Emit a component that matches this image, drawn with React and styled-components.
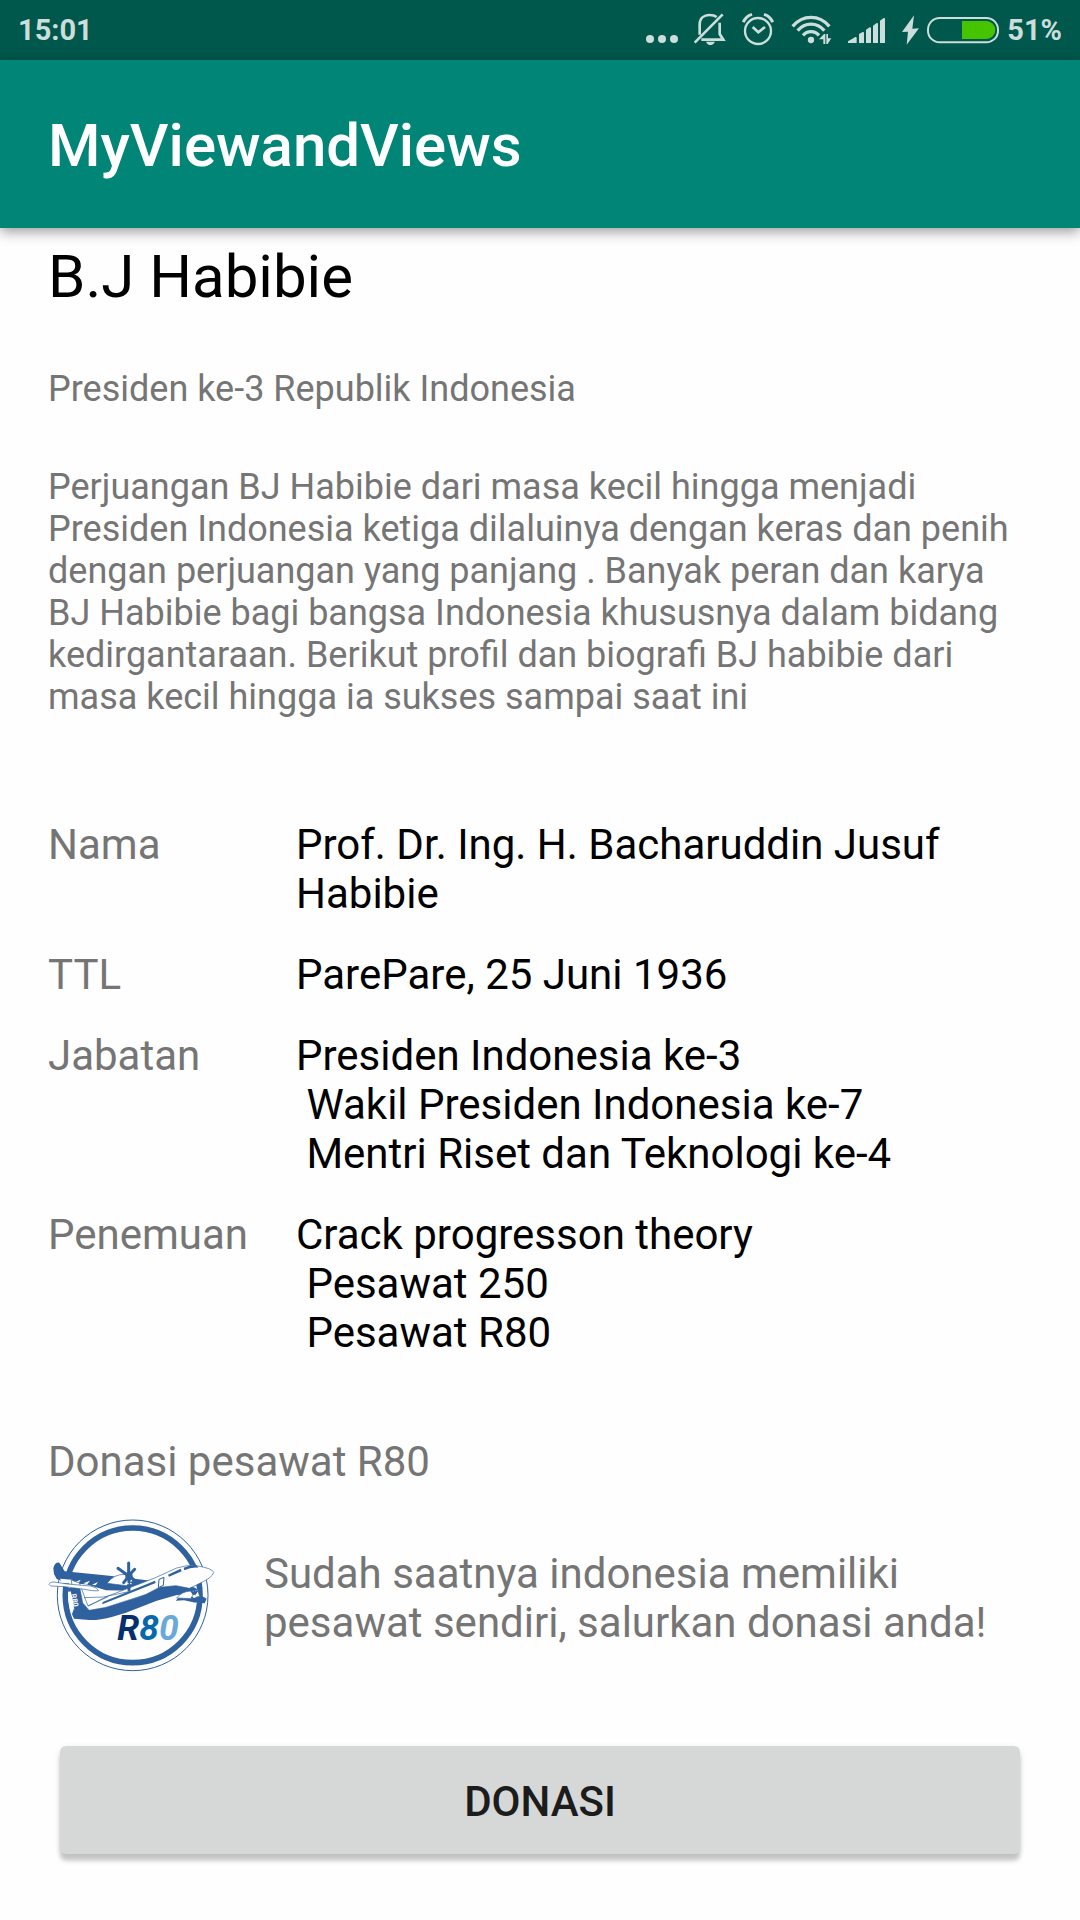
import React from "react";
import styled, { createGlobalStyle } from "styled-components";

const GlobalStyle = createGlobalStyle`
  *, *::before, *::after { box-sizing: border-box; }
  body { margin: 0; background: #fefefe; font-family: Roboto, "Noto Sans", sans-serif; }
  h1, h2, p, dl, dt, dd { margin: 0; font-weight: 400; }
`;

const Page = styled.div`
  min-height: 100vh;
  background: #fefefe;
  color: #757575;
`;

const StatusBar = styled.div`
  display: flex;
  align-items: center;
  justify-content: space-between;
  height: 60px;
  padding: 0 18px;
  background: #00574b;
  color: #ccdddb;
  font-size: 29px;
  font-weight: 700;
  line-height: 36px;
`;

const StatusIcons = styled.div`
  display: flex;
  align-items: center;
  gap: 16px;
`;

const Power = styled.div`
  display: flex;
  align-items: center;
  gap: 8px;
`;

const Glyph = styled.svg`
  display: block;
  flex: none;
  width: ${(p) => p.$w}px;
  height: 60px;
  fill: #ccdddb;
`;

const AppBar = styled.header`
  position: relative;
  display: flex;
  align-items: center;
  height: 168px;
  padding: 4px 48px 0;
  background: #008577;
  box-shadow: 0 4px 12px rgba(0, 0, 0, 0.38);
`;

const AppTitle = styled.h1`
  && { font-weight: 500; }
  color: #fff;
  font-size: 60px;
  line-height: 70px;
`;

const Content = styled.main`
  display: flex;
  flex-direction: column;
  padding: 14px 48px 48px;
`;

const Name = styled.h2`
  color: #000;
  font-size: 60px;
  line-height: 70px;
`;

const Text = styled.p`
  margin-top: 56px;
  font-size: 36px;
  line-height: 42px;
`;

const Facts = styled.dl`
  display: grid;
  grid-template-columns: max-content 1fr;
  gap: 32px 48px;
  margin-top: 102px;
  font-size: 42px;
  line-height: 49px;
`;

const FactValue = styled.dd`
  color: #000;
  white-space: pre-wrap;
`;

const SectionTitle = styled.h2`
  margin-top: 80px;
  font-size: 42px;
  line-height: 49px;
`;

const Donation = styled.section`
  display: flex;
  align-items: center;
  gap: 48px;
  margin-top: 32px;
`;

const Logo = styled.svg`
  display: block;
  flex: none;
  width: 168px;
  height: 160px;
`;

const DonationText = styled.p`
  flex: 1;
  font-size: 42px;
  line-height: 49px;
`;

const DonateButton = styled.button`
  height: 108px;
  margin: 68px 12px 0;
  padding: 2px 0 0;
  border: 0;
  border-radius: 6px;
  background: #d6d8d7;
  box-shadow: 0 7px 4px rgba(0, 0, 0, 0.19), 0 2px 6px rgba(0, 0, 0, 0.1);
  color: #1c1c1c;
  font-family: inherit;
  font-size: 42px;
  font-weight: 500;
  line-height: 49px;
  text-transform: uppercase;
`;

const facts = [
  ["Nama", "Prof. Dr. Ing. H. Bacharuddin Jusuf Habibie"],
  ["TTL", "ParePare, 25 Juni 1936"],
  ["Jabatan", "Presiden Indonesia ke-3\n Wakil Presiden Indonesia ke-7\n Mentri Riset dan Teknologi ke-4"],
  ["Penemuan", "Crack progresson theory\n Pesawat 250\n Pesawat R80"],
];

const STATUS = "#ccdddb";

function DotsIcon() {
  return (
    <Glyph $w={32} viewBox="51 0 96 180" aria-hidden="true">
      <circle cx="63" cy="117" r="12" />
      <circle cx="99" cy="117" r="12" />
      <circle cx="135" cy="117" r="12" />
    </Glyph>
  );
}

function BellOffIcon() {
  return (
    <Glyph $w={32} viewBox="195 0 96 180" aria-hidden="true">
      <path
        d="M212 104V73c0-17 12-28 30-28 9 0 16 2 21 6M272 68v34l11 17h-66"
        fill="none"
        stroke={STATUS}
        strokeWidth="8"
      />
      <path d="M197 128L281 43" fill="none" stroke={STATUS} strokeWidth="8" />
      <path d="M231 125h27c-4 7-8 10-14 10s-10-3-13-10z" />
    </Glyph>
  );
}

function AlarmIcon() {
  return (
    <Glyph $w={32} viewBox="339 0 96 180" aria-hidden="true">
      <g fill="none" stroke={STATUS}>
        <circle cx="387" cy="93" r="39" strokeWidth="7" />
        <path d="M371 81l17 16 20-16" strokeWidth="8" />
        <path d="M343 67c4-11 13-20 26-24M431 67c-4-11-13-20-26-24" strokeWidth="9" />
      </g>
    </Glyph>
  );
}

function WifiIcon() {
  return (
    <Glyph $w={42} viewBox="483 0 126 180" aria-hidden="true">
      <g fill="none" stroke={STATUS} strokeWidth="10">
        <path d="M491 79c30-36 80-36 110 0" />
        <path d="M506 92c22-26 58-26 80 0" />
        <path d="M522 106c13-15 35-15 48 0" />
      </g>
      <circle cx="546" cy="120" r="9.5" />
      <path
        d="M570 118l15-16h4v30h-6v-14zM592 102h5v13h10l-11 17h-4z"
        stroke="#00574b"
        strokeWidth="3"
        paintOrder="stroke"
      />
    </Glyph>
  );
}

function SignalIcon() {
  return (
    <Glyph $w={38} viewBox="-3 0 114 180" aria-hidden="true">
      <path d="M-3 129v-5l22-13q4-1 4 3v15z" />
      <path d="M30 129V102l11-6q4-1 4 3v30z" />
      <path d="M51 129V89l11-7q4-1 4 3v44z" />
      <path d="M72 129V77l11-8q4-1 4 3v57z" />
      <path d="M93 129V62l11-8q4-1 4 3v72z" />
    </Glyph>
  );
}

function BoltIcon() {
  return (
    <Glyph $w={17} viewBox="161 0 51 180" aria-hidden="true">
      <path d="M197 46l-36 50 18-1-4 39 37-49-20 1z" />
    </Glyph>
  );
}

function BatteryIcon() {
  return (
    <Glyph $w={72} viewBox="234 0 216 180" aria-hidden="true">
      <rect x="237" y="54" width="210" height="73" rx="35" fill="none" stroke={STATUS} strokeWidth="6" />
      <path d="M339 63h73a27 27 0 0 1 0 54h-73z" fill="#46c400" />
    </Glyph>
  );
}

function R80Logo() {
  const blue = "#2f619f";
  return (
    <Logo viewBox="54 54 504 480" role="img" aria-label="R80">
      <circle cx="308" cy="286" r="226" fill="#fefefe" stroke={blue} strokeWidth="3" />
      <circle cx="308" cy="286" r="202" fill="none" stroke={blue} strokeWidth="17" />

      {/* rear wing and its tip */}
      <path
        d="M70 205q4-19 18-17l16 26 134 13 125 15-60 30-75-1-60-18-50-3-20-6-18-7-8-15z"
        fill={blue}
      />
      <path d="M90 236l36 3 12 14-42-5z" fill="#fefefe" />
      <path d="M136 246l16-7-6 10zM160 250l20-8-8 11zM186 254l18-8-7 10z" fill="#fefefe" />

      {/* blue fin running into the belly */}
      <path
        d="M114 264h36l8 34 17 32 53-8 90-29 30-10 42-22 48-5 54 6 22 14-76 10-60 17-90 35-40 12q-40 11-70 10l-46-4-6-13 5-15-13-20z"
        fill={blue}
      />

      {/* fuselage */}
      <path
        d="M124 240l24 9 26 69 58-29 142-55 66-30q30-10 58-7 50 8 53 20-2 16-52 38l-21 10-40-8-50 5-40 21-30 10-90 29-50 9-20-22-8-42-24-10z"
        fill="#fefefe"
        stroke={blue}
        strokeWidth="2"
      />
      <path d="M162 293l58-2 76-16M174 318l60-28" fill="none" stroke={blue} strokeWidth="2" />

      {/* tail plane */}
      <path
        d="M57 253q3-8 15-7l40 6 70 6q20 4 24 14-14 2-42-4l-60-8-42-2z"
        fill="#fefefe"
        stroke={blue}
        strokeWidth="2"
      />
      <path d="M114 276q-1 28 5 40l14 14-3-24-8-32z" fill="#fefefe" />

      {/* window line, door and cockpit */}
      <path d="M217 313l160-64-2-7-157 64zM417 230l38-16-3-8-38 18zM463 211q20-10 42-8l-6-8q-20-1-38 8z" fill={blue} />
      <path d="M387 238l15-6-2 24-15 7z" fill="#fefefe" stroke={blue} strokeWidth="3" />

      {/* left engine */}
      <path d="M231 250q20-28 54-27l20 6 3 14-19 14z" fill="#fefefe" stroke={blue} strokeWidth="2" />
      <path
        d="M296 225v-36M296 228l-32-23M297 226l17-18M295 230l-14 18M299 230l18 13M297 225v45"
        fill="none"
        stroke={blue}
        strokeWidth="9"
        strokeLinecap="round"
      />
      <ellipse cx="297" cy="229" rx="11" ry="13" fill={blue} />
      <path d="M291 251h5M300 251h5" stroke="#fefefe" strokeWidth="3" />

      {/* right engine */}
      <path d="M437 302l18-19 45-4 30 17-6 14-34-3-28-6z" fill={blue} />
      <path d="M440 294q15-20 43-21l20-4 6 20-24 7z" fill="#fefefe" stroke={blue} strokeWidth="2" />
      <path d="M493 265v42M484 272l17 28M502 272l-18 24" fill="none" stroke={blue} strokeWidth="6" />
      <circle cx="493" cy="289" r="5" fill="#fefefe" />

      <text
        x="123"
        y="283"
        transform="rotate(78 123 283)"
        fill="#fefefe"
        fontFamily="Roboto, sans-serif"
        fontSize="22"
        fontWeight="700"
      >
        R80
      </text>
      <text
        x="262"
        y="419"
        fontFamily="Roboto, sans-serif"
        fontSize="106"
        fontStyle="italic"
        fontWeight="700"
      >
        <tspan fill="#062f70">R</tspan>
        <tspan fill="#0868ae">8</tspan>
        <tspan fill="#69a9da">0</tspan>
      </text>
    </Logo>
  );
}

export default function App() {
  return (
    <Page>
      <GlobalStyle />
      <StatusBar>
        <span>15:01</span>
        <StatusIcons>
          <DotsIcon />
          <BellOffIcon />
          <AlarmIcon />
          <WifiIcon />
          <SignalIcon />
          <Power>
            <BoltIcon />
            <BatteryIcon />
            <span>51%</span>
          </Power>
        </StatusIcons>
      </StatusBar>
      <AppBar>
        <AppTitle>MyViewandViews</AppTitle>
      </AppBar>
      <Content>
        <Name>B.J Habibie</Name>
        <Text>Presiden ke-3 Republik Indonesia</Text>
        <Text>
          Perjuangan BJ Habibie dari masa kecil hingga menjadi Presiden Indonesia ketiga dilaluinya
          dengan keras dan penih dengan perjuangan yang panjang . Banyak peran dan karya BJ Habibie
          bagi bangsa Indonesia khususnya dalam bidang kedirgantaraan. Berikut profil dan biografi
          BJ habibie dari masa kecil hingga ia sukses sampai saat ini
        </Text>
        <Facts>
          {facts.map(([label, value]) => (
            <React.Fragment key={label}>
              <dt>{label}</dt>
              <FactValue>{value}</FactValue>
            </React.Fragment>
          ))}
        </Facts>
        <SectionTitle>Donasi pesawat R80</SectionTitle>
        <Donation>
          <R80Logo />
          <DonationText>Sudah saatnya indonesia memiliki pesawat sendiri, salurkan donasi anda!</DonationText>
        </Donation>
        <DonateButton type="button">Donasi</DonateButton>
      </Content>
    </Page>
  );
}
